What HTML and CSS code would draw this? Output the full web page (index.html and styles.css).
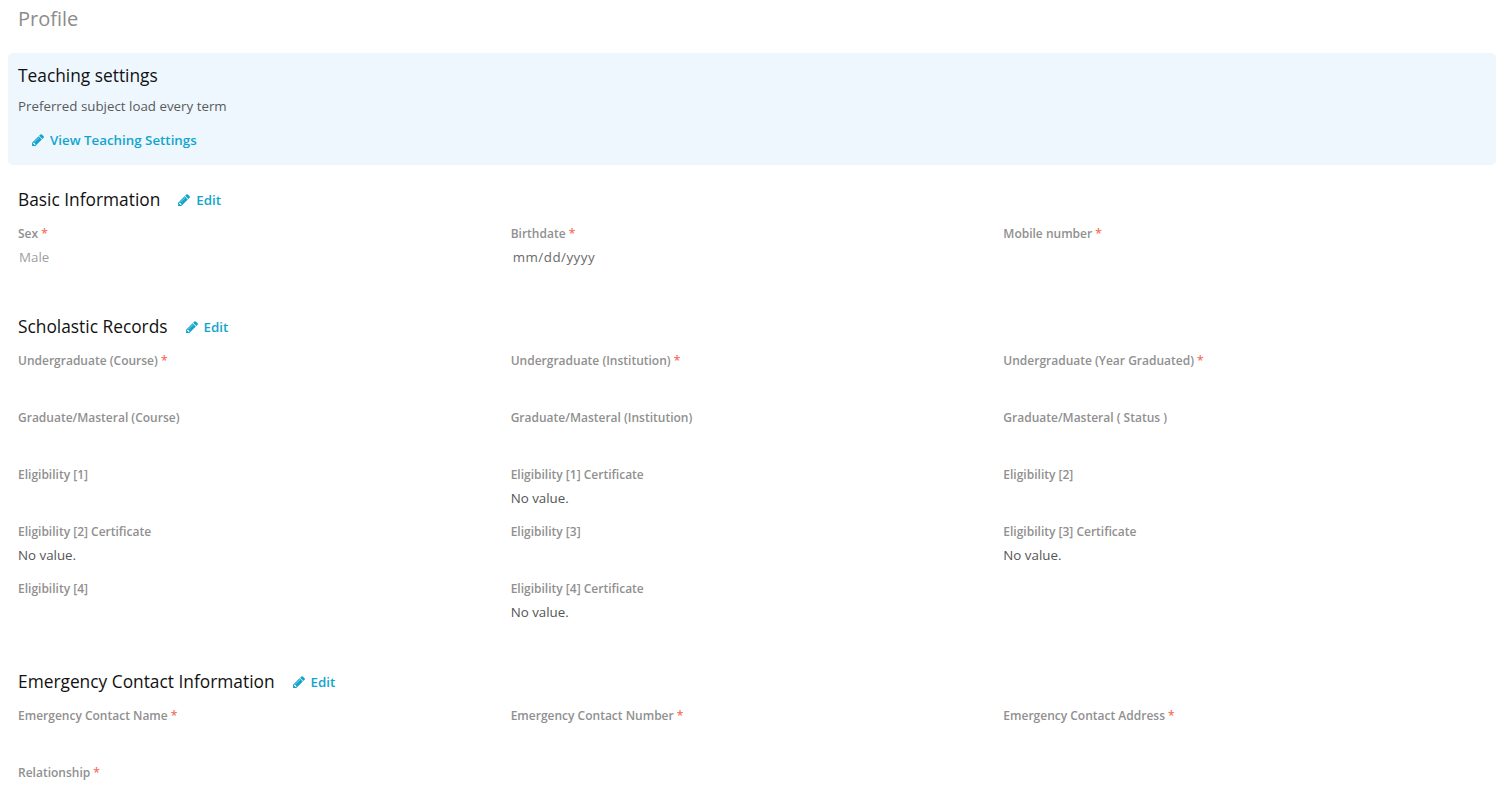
FILE: index.html
```html
<!DOCTYPE html>
<html lang="en">
<head>
<meta charset="utf-8">
<title>Profile</title>
<link rel="stylesheet" href="styles.css">
</head>
<body>
<svg class="defs" width="0" height="0" aria-hidden="true"><symbol id="pencil" viewBox="128 128 1515 1536"><path d="M491 1536l91-91-235-235-91 91v107h128v128h107zm523-928q0-22-22-22-10 0-17 7l-542 542q-7 7-7 17 0 22 22 22 10 0 17-7l542-542q7-7 7-17zm-54-192l416 416-832 832h-416v-416zm683 96q0 53-37 90l-166 166-416-416 166-165q36-38 90-38 53 0 91 38l235 234q37 39 37 91z"/></symbol></svg>
<h1 class="page-title">Profile</h1>
<section class="banner">
  <h2 class="heading">Teaching settings</h2>
  <p class="banner-text">Preferred subject load every term</p>
  <a class="link banner-link" href="#"><svg class="pencil"><use href="#pencil"/></svg>View Teaching Settings</a>
</section>
<section class="section">
  <div class="section-head"><h2 class="heading">Basic Information</h2><a class="link" href="#"><svg class="pencil"><use href="#pencil"/></svg>Edit</a></div>
  <div class="fields">
    <div class="field"><div class="label">Sex <span class="req">*</span></div><div class="value muted">Male</div></div>
    <div class="field"><div class="label">Birthdate <span class="req">*</span></div><div class="value date">mm/dd/yyyy</div></div>
    <div class="field"><div class="label">Mobile number <span class="req">*</span></div></div>
  </div>
</section>
<section class="section">
  <div class="section-head"><h2 class="heading">Scholastic Records</h2><a class="link" href="#"><svg class="pencil"><use href="#pencil"/></svg>Edit</a></div>
  <div class="fields">
    <div class="field"><div class="label">Undergraduate (Course) <span class="req">*</span></div></div>
    <div class="field"><div class="label">Undergraduate (Institution) <span class="req">*</span></div></div>
    <div class="field"><div class="label">Undergraduate (Year Graduated) <span class="req">*</span></div></div>
    <div class="field"><div class="label">Graduate/Masteral (Course)</div></div>
    <div class="field"><div class="label">Graduate/Masteral (Institution)</div></div>
    <div class="field"><div class="label">Graduate/Masteral ( Status )</div></div>
    <div class="field"><div class="label">Eligibility [1]</div></div>
    <div class="field"><div class="label">Eligibility [1] Certificate</div><div class="value">No value.</div></div>
    <div class="field"><div class="label">Eligibility [2]</div></div>
    <div class="field"><div class="label">Eligibility [2] Certificate</div><div class="value">No value.</div></div>
    <div class="field"><div class="label">Eligibility [3]</div></div>
    <div class="field"><div class="label">Eligibility [3] Certificate</div><div class="value">No value.</div></div>
    <div class="field"><div class="label">Eligibility [4]</div></div>
    <div class="field"><div class="label">Eligibility [4] Certificate</div><div class="value">No value.</div></div>
  </div>
</section>
<section class="section">
  <div class="section-head"><h2 class="heading">Emergency Contact Information</h2><a class="link" href="#"><svg class="pencil"><use href="#pencil"/></svg>Edit</a></div>
  <div class="fields">
    <div class="field"><div class="label">Emergency Contact Name <span class="req">*</span></div></div>
    <div class="field"><div class="label">Emergency Contact Number <span class="req">*</span></div></div>
    <div class="field"><div class="label">Emergency Contact Address <span class="req">*</span></div></div>
    <div class="field"><div class="label">Relationship <span class="req">*</span></div></div>
  </div>
</section>
</body>
</html>
```
FILE: styles.css
```css
html, body { margin: 0; padding: 0; background: #fff; }
body { font-family: "Open Sans", "Liberation Sans", sans-serif; color: #4a4a4a; height: 803px; overflow: hidden; }
.defs { position: absolute; }
.page-title { margin: 0; padding: 5px 0 0 18px; height: 53px; box-sizing: border-box; font-size: 20px; line-height: 28px; font-weight: 400; color: #8c8c8c; }
.banner { margin: 0 10px 0 8px; padding: 9px 10px 0; height: 112px; box-sizing: border-box; background: #eef7fe; border-radius: 5px; }
.heading { margin: 0; font-size: 17.33px; line-height: 26px; font-weight: 400; color: #111; }
.banner-text { margin: 9px 0 0; font-size: 13.33px; line-height: 18px; color: #5a5a5a; }
.link { display: inline-flex; align-items: center; font-size: 13.33px; line-height: 18px; font-weight: 600; color: #12a5cc; text-decoration: none; }
.banner-link { margin: 16px 0 0 14px; }
.section-head .link { margin-top: 2px; }
.pencil { width: 12px; height: 12px; margin-right: 6px; fill: #12a5cc; }
.section { padding: 0 0 0 18px; }
.section-head { display: flex; align-items: center; gap: 18px; height: 26px; padding-top: 21px; }
.fields { display: grid; grid-template-columns: repeat(3, 1fr); grid-auto-rows: 57px; width: 1478px; padding-top: 11px; padding-bottom: 33px; }
.section + .section .section-head { padding-top: 0; }
.label { font-size: 12px; line-height: 18px; font-weight: 600; color: #909090; margin-top: 2px; }
.req { color: #f4715c; }
.value { margin-top: 5px; font-size: 13.33px; line-height: 18px; color: #555; }
.muted { color: #a0a0a0; padding-left: 1px; }
.date { padding-left: 2px; letter-spacing: 0.5px; color: #6a6a6a; }
```
